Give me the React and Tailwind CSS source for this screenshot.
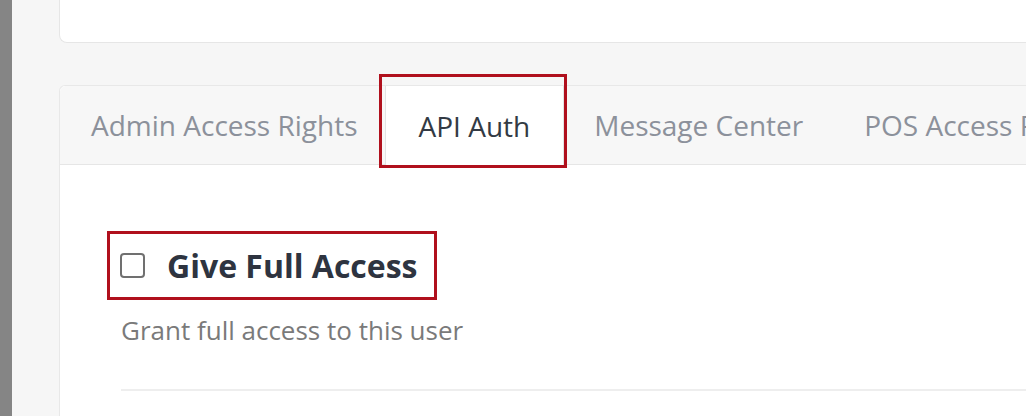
import React from "react";

export default function App() {
  const font = { fontFamily: '"Open Sans", "Liberation Sans", sans-serif' };
  return (
    <div className="flex w-[1026px] h-[416px] overflow-hidden bg-[#f6f6f6]" style={font}>
      <div className="w-[12px] shrink-0 bg-[#858585]" />
      <div className="flex-1 flex flex-col pl-[47px] min-w-0">
        <div className="h-[43px] shrink-0 bg-white border-l border-b border-[#e6e6e6] rounded-bl-[8px]" />
        <div className="mt-[42px] flex-1 flex flex-col border-l border-t border-[#e8e8e8] bg-white rounded-tl-[6px] min-w-0">
          <div className="h-[79px] shrink-0 flex bg-[#f7f7f7] border-b border-[#e6e6e6] whitespace-nowrap text-[28px] rounded-tl-[6px]">
            <div className="flex items-center pl-[31px] pr-[27px] text-[#8c919b]">Admin Access Rights</div>
            <div className="relative flex items-center px-[33px] bg-white border-x border-[#e3e3e3] text-[#333a44] -mb-px">
              API Auth
              <div className="absolute left-[-7px] right-[-4px] top-[-12px] bottom-[-3px] border-[3px] border-[#b0101d]" />
            </div>
            <div className="flex items-center px-[30px] text-[#8c919b]">Message Center</div>
            <div className="flex items-center px-[31px] text-[#8c919b]">POS Access Rights</div>
          </div>
          <div className="pl-[61px] pt-[66px]">
            <div className="relative flex items-center h-[69px]">
              <div className="absolute left-[-14px] top-0 w-[330px] h-[69px] border-[3.5px] border-[#b0101d]" />
              <div className="w-[25px] h-[25px] -ml-px rounded-[4px] border-2 border-[#707070] bg-white" />
              <span className="ml-[22px] text-[32px] font-bold text-[#2e3440]">Give Full Access</span>
            </div>
            <div className="mt-[12px] text-[26px] leading-[36px] text-[#7a7a7a]">Grant full access to this user</div>
            <div className="mt-[41px] h-[2px] bg-[#eeeeee]" />
          </div>
        </div>
      </div>
    </div>
  );
}
